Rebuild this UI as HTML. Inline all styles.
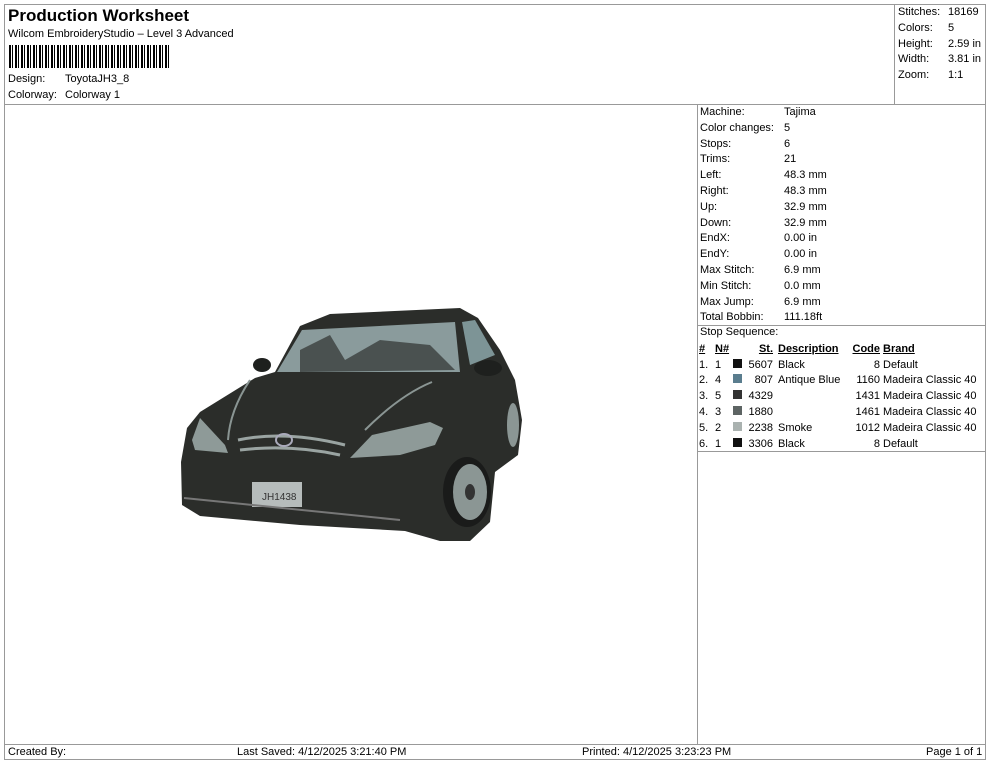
<!DOCTYPE html>
<html><head><meta charset="utf-8"><style>
body{margin:0;background:#fff;width:990px;height:762px;position:relative;font-family:"Liberation Sans",sans-serif;font-size:11px;color:#000;overflow:hidden}
.a{position:absolute;white-space:nowrap}
.ln{position:absolute;background:#999}
table{border-collapse:collapse;font-size:11px}
td{padding:0;height:15.8px;white-space:nowrap}
</style></head><body>
<div class="ln" style="left:4px;top:4px;width:982px;height:1px"></div>
<div class="ln" style="left:4px;top:4px;width:1px;height:756px"></div>
<div class="ln" style="left:985px;top:4px;width:1px;height:756px"></div>
<div class="ln" style="left:4px;top:104px;width:982px;height:1px"></div>
<div class="ln" style="left:894px;top:4px;width:1px;height:100px"></div>
<div class="ln" style="left:697px;top:104px;width:1px;height:640px"></div>
<div class="ln" style="left:697px;top:325px;width:289px;height:1px"></div>
<div class="ln" style="left:697px;top:451px;width:289px;height:1px"></div>
<div class="ln" style="left:4px;top:744px;width:982px;height:1px"></div>
<div class="ln" style="left:4px;top:759px;width:982px;height:1px"></div>

<div class="a" style="left:8px;top:6px;font-size:17px;font-weight:bold">Production Worksheet</div>
<div class="a" style="left:8px;top:28px">Wilcom EmbroideryStudio – Level 3 Advanced</div>
<div class="a" style="left:9px;top:45px;width:160px;height:23px;background:repeating-linear-gradient(90deg,#000 0 2px,#fff 2px 3px,#000 3px 4px,#fff 4px 6px)"></div>
<div class="a" style="left:8px;top:73px">Design:</div><div class="a" style="left:65px;top:73px">ToyotaJH3_8</div>
<div class="a" style="left:8px;top:89px">Colorway:</div><div class="a" style="left:65px;top:89px">Colorway 1</div>

<div class="a" style="left:898px;top:5px;line-height:15.8px">Stitches:<br>Colors:<br>Height:<br>Width:<br>Zoom:</div>
<div class="a" style="left:948px;top:5px;line-height:15.8px">18169<br>5<br>2.59 in<br>3.81 in<br>1:1</div>

<div class="a" style="left:700px;top:105px;line-height:15.8px">Machine:<br>Color changes:<br>Stops:<br>Trims:<br>Left:<br>Right:<br>Up:<br>Down:<br>EndX:<br>EndY:<br>Max Stitch:<br>Min Stitch:<br>Max Jump:<br>Total Bobbin:</div>
<div class="a" style="left:784px;top:105px;line-height:15.8px">Tajima<br>5<br>6<br>21<br>48.3 mm<br>48.3 mm<br>32.9 mm<br>32.9 mm<br>0.00 in<br>0.00 in<br>6.9 mm<br>0.0 mm<br>6.9 mm<br>111.18ft</div>

<div class="a" style="left:700px;top:326px">Stop Sequence:</div>
<table class="a" style="left:699px;top:341px">
<tr style="font-weight:bold;text-decoration:underline"><td style="width:16px">#</td><td style="width:18px">N#</td><td style="width:12px"></td><td style="width:28px;text-align:right">St.</td><td style="width:5px"></td><td style="width:68px">Description</td><td style="width:34px;text-align:right">Code</td><td style="width:3px"></td><td>Brand</td></tr>
<tr><td>1.</td><td>1</td><td><span style="display:inline-block;width:9px;height:9px;background:#111"></span></td><td style="text-align:right">5607</td><td></td><td>Black</td><td style="text-align:right">8</td><td></td><td>Default</td></tr>
<tr><td>2.</td><td>4</td><td><span style="display:inline-block;width:9px;height:9px;background:#5a7d8e"></span></td><td style="text-align:right">807</td><td></td><td>Antique Blue</td><td style="text-align:right">1160</td><td></td><td>Madeira Classic 40</td></tr>
<tr><td>3.</td><td>5</td><td><span style="display:inline-block;width:9px;height:9px;background:#333"></span></td><td style="text-align:right">4329</td><td></td><td></td><td style="text-align:right">1431</td><td></td><td>Madeira Classic 40</td></tr>
<tr><td>4.</td><td>3</td><td><span style="display:inline-block;width:9px;height:9px;background:#5d6463"></span></td><td style="text-align:right">1880</td><td></td><td></td><td style="text-align:right">1461</td><td></td><td>Madeira Classic 40</td></tr>
<tr><td>5.</td><td>2</td><td><span style="display:inline-block;width:9px;height:9px;background:#aab2b0"></span></td><td style="text-align:right">2238</td><td></td><td>Smoke</td><td style="text-align:right">1012</td><td></td><td>Madeira Classic 40</td></tr>
<tr><td>6.</td><td>1</td><td><span style="display:inline-block;width:9px;height:9px;background:#111"></span></td><td style="text-align:right">3306</td><td></td><td>Black</td><td style="text-align:right">8</td><td></td><td>Default</td></tr>
</table>

<svg class="a" style="left:0;top:0" width="697" height="744">
<path d="M182,505 L181,462 L187,428 L200,412 L255,378 L275,372 L300,326 L330,314 L460,308 L478,318 L500,350 L515,380 L522,420 L518,455 L495,472 L490,522 L470,541 L440,541 L405,531 L300,525 L200,516 Z" fill="#2b2d2a"/>
<path d="M277,372 L302,330 L455,322 L460,372 Z" fill="#8a9b9c"/>
<path d="M300,350 L330,335 L345,360 L380,340 L430,345 L455,370 L300,372 Z" fill="#3a3e3d" opacity=".8"/>
<path d="M462,322 L475,320 L495,355 L470,365 Z" fill="#7d9496"/>
<ellipse cx="262" cy="365" rx="9" ry="7" fill="#1e201e"/>
<ellipse cx="488" cy="368" rx="14" ry="8" fill="#1e201e"/>
<path d="M192,440 L200,418 L225,445 L228,453 L195,450 Z" fill="#8e9a98"/>
<path d="M350,458 L372,435 L430,422 L443,428 L435,445 L400,455 Z" fill="#8e9a98"/>
<path d="M238,440 Q285,430 345,445 M240,450 Q290,444 340,455" stroke="#9aa4a2" stroke-width="3" fill="none"/>
<ellipse cx="284" cy="440" rx="8" ry="6" fill="none" stroke="#aab" stroke-width="2"/>
<path d="M365,430 Q400,395 432,382 M250,380 Q230,410 228,440" stroke="#8a9593" stroke-width="2" fill="none"/>
<rect x="252" y="482" width="50" height="25" fill="#b6bcbb"/>
<text x="262" y="500" font-size="10" fill="#333" font-family="Liberation Sans">JH1438</text>
<ellipse cx="467" cy="492" rx="24" ry="35" fill="#1a1b1a"/>
<ellipse cx="470" cy="492" rx="17" ry="28" fill="#8b9694"/>
<ellipse cx="470" cy="492" rx="5" ry="8" fill="#333"/>
<ellipse cx="513" cy="425" rx="6" ry="22" fill="#8b9694"/>
<path d="M184,498 Q300,510 400,520" stroke="#777" stroke-width="2" fill="none"/>
</svg>

<div class="a" style="left:8px;top:746px">Created By:</div>
<div class="a" style="left:237px;top:746px">Last Saved: 4/12/2025 3:21:40 PM</div>
<div class="a" style="left:582px;top:746px">Printed: 4/12/2025 3:23:23 PM</div>
<div class="a" style="left:926px;top:746px">Page 1 of 1</div>
</body></html>
